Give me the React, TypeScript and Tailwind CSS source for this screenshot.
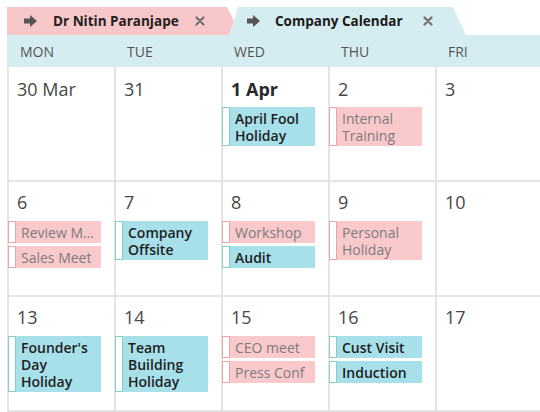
import React from "react";

type Ev = { title: string; kind: "blue" | "pink"; clip?: boolean };
type Day = { label: string; bold?: boolean; events: Ev[] };

const weeks: Day[][] = [
  [
    { label: "30 Mar", events: [] },
    { label: "31", events: [] },
    { label: "1 Apr", bold: true, events: [{ title: "April Fool Holiday", kind: "blue" }] },
    { label: "2", events: [{ title: "Internal Training", kind: "pink" }] },
    { label: "3", events: [] },
  ],
  [
    {
      label: "6",
      events: [
        { title: "Review Meeting", kind: "pink", clip: true },
        { title: "Sales Meet", kind: "pink" },
      ],
    },
    { label: "7", events: [{ title: "Company Offsite", kind: "blue" }] },
    {
      label: "8",
      events: [
        { title: "Workshop", kind: "pink" },
        { title: "Audit", kind: "blue" },
      ],
    },
    { label: "9", events: [{ title: "Personal Holiday", kind: "pink" }] },
    { label: "10", events: [] },
  ],
  [
    { label: "13", events: [{ title: "Founder's Day Holiday", kind: "blue" }] },
    { label: "14", events: [{ title: "Team Building Holiday", kind: "blue" }] },
    {
      label: "15",
      events: [
        { title: "CEO meet", kind: "pink" },
        { title: "Press Conf", kind: "pink" },
      ],
    },
    {
      label: "16",
      events: [
        { title: "Cust Visit", kind: "blue" },
        { title: "Induction", kind: "blue" },
      ],
    },
    { label: "17", events: [] },
  ],
];

function Arrow() {
  return (
    <svg width="13" height="12" viewBox="0 0 13 12">
      <path d="M0 3.5h6V0l7 6-7 6V8.5H0z" fill="#555" />
    </svg>
  );
}

function Close() {
  return (
    <svg width="10" height="10" viewBox="0 0 10 10">
      <path d="M1.5 1.5l7 7M8.5 1.5l-7 7" stroke="#6f6f6f" strokeWidth="2.2" strokeLinecap="round" />
    </svg>
  );
}

function Event({ ev }: { ev: Ev }) {
  const blue = ev.kind === "blue";
  return (
    <div className={`flex w-[93px] -ml-px ${blue ? "bg-[#a7e0e9]" : "bg-[#f9c9cb]"}`}>
      <div
        className={`w-[8px] shrink-0 bg-white border ${blue ? "border-[#86cfc6]" : "border-[#eba5a8]"}`}
      />
      <div
        className={`pl-[5px] pr-[3px] py-[2.5px] text-[14px] leading-[17px] min-w-0 ${
          blue ? "font-semibold text-[#1e1e1e]" : "text-[#7c7c7c]"
        } ${ev.clip ? "truncate" : ""}`}
      >
        {ev.title}
      </div>
    </div>
  );
}

export default function App() {
  return (
    <div className="w-[540px] h-[412px] bg-white overflow-hidden font-['Open_Sans','Noto_Sans',sans-serif]">
      <div className="flex h-[28px] mt-[7px] ml-[7px]">
        <div className="w-[220px] bg-[#f8c7c9] flex items-center pl-[17px]">
          <Arrow />
          <span className="ml-[16px] text-[13.5px] font-bold text-[#222]">Dr Nitin Paranjape</span>
          <span className="ml-auto mr-[22px] flex">
            <Close />
          </span>
        </div>
        <svg width="12" height="28" viewBox="0 0 12 28" className="shrink-0">
          <polygon points="0,0 7,14 2,28 0,28" fill="#f8c7c9" />
          <polygon points="11,0 12,0 12,28 2,28 7,14" fill="#d5edf1" />
        </svg>
        <div className="w-[214px] bg-[#d5edf1] flex items-center pl-[8px]">
          <Arrow />
          <span className="ml-[15px] text-[13.5px] font-bold text-[#1a1a1a]">Company Calendar</span>
          <span className="ml-auto mr-[20px] flex">
            <Close />
          </span>
        </div>
        <svg width="13" height="28" viewBox="0 0 13 28" className="shrink-0">
          <polygon points="0,0 0,28 13,28" fill="#d5edf1" />
        </svg>
      </div>
      <div className="ml-[7px] h-[32px] bg-[#d5edf1] grid grid-cols-[107px_107px_107px_107px_1fr] items-center">
        {["MON", "TUE", "WED", "THU", "FRI"].map((d) => (
          <div key={d} className="pl-[13px] text-[14px] text-[#555]">
            {d}
          </div>
        ))}
      </div>
      {weeks.map((week, wi) => (
        <div
          key={wi}
          className="ml-[7px] grid grid-cols-[107px_107px_107px_107px_1fr] h-[115px] border-b-2 border-[#e4e4e4]"
        >
          {week.map((day) => (
            <div key={day.label} className="border-l-2 border-[#e4e4e4] flex flex-col">
              <div
                className={`pl-[8px] text-[18px] leading-[24px] ${
                  wi === 0 ? "pt-[10px]" : "pt-[8px]"
                } ${day.bold ? "font-bold text-[#2a2a2a]" : "text-[#474747]"}`}
              >
                {day.label}
              </div>
              <div className={`flex flex-col gap-[3px] ${wi === 0 ? "mt-[6px]" : "mt-[7px]"}`}>
                {day.events.map((ev) => (
                  <Event key={ev.title} ev={ev} />
                ))}
              </div>
            </div>
          ))}
        </div>
      ))}
    </div>
  );
}
